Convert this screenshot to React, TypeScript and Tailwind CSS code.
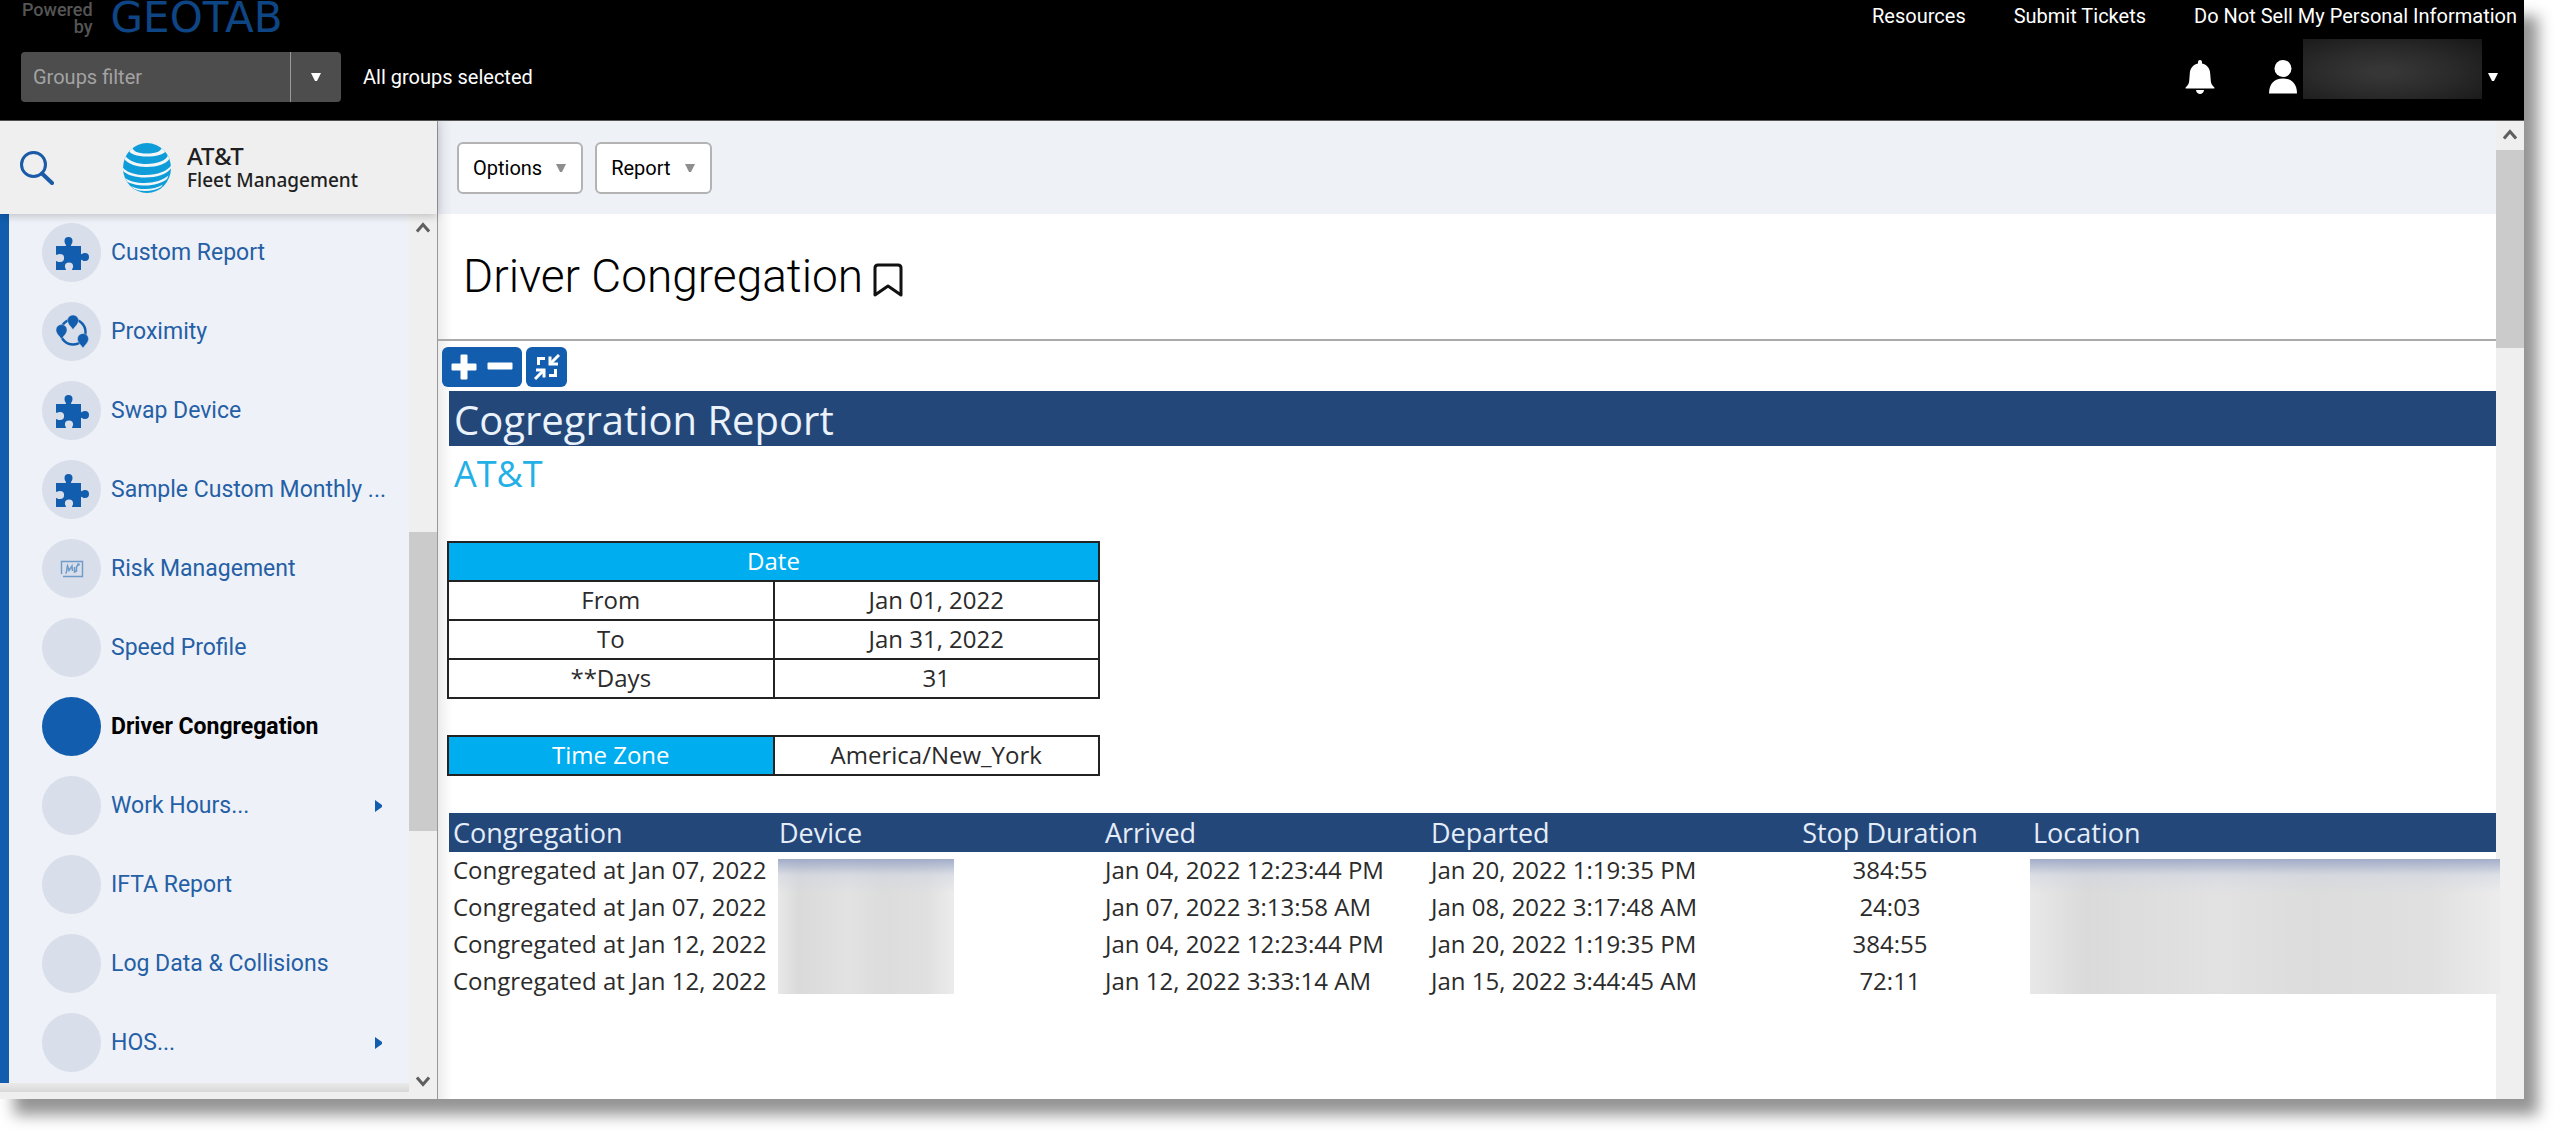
import React from 'react';

type IconName = 'puzzle' | 'proximity' | 'chart';

interface NavItem {
  label: string;
  icon?: IconName;
  active?: boolean;
  expandable?: boolean;
}

const navItems: NavItem[] = [
  { label: 'Custom Report', icon: 'puzzle' },
  { label: 'Proximity', icon: 'proximity' },
  { label: 'Swap Device', icon: 'puzzle' },
  { label: 'Sample Custom Monthly ...', icon: 'puzzle' },
  { label: 'Risk Management', icon: 'chart' },
  { label: 'Speed Profile' },
  { label: 'Driver Congregation', active: true },
  { label: 'Work Hours...', expandable: true },
  { label: 'IFTA Report' },
  { label: 'Log Data & Collisions' },
  { label: 'HOS...', expandable: true },
];

const stops = [
  { group: 'Congregated at Jan 07, 2022', arrived: 'Jan 04, 2022 12:23:44 PM', departed: 'Jan 20, 2022 1:19:35 PM', duration: '384:55' },
  { group: 'Congregated at Jan 07, 2022', arrived: 'Jan 07, 2022 3:13:58 AM', departed: 'Jan 08, 2022 3:17:48 AM', duration: '24:03' },
  { group: 'Congregated at Jan 12, 2022', arrived: 'Jan 04, 2022 12:23:44 PM', departed: 'Jan 20, 2022 1:19:35 PM', duration: '384:55' },
  { group: 'Congregated at Jan 12, 2022', arrived: 'Jan 12, 2022 3:33:14 AM', departed: 'Jan 15, 2022 3:44:45 AM', duration: '72:11' },
];

const dateRows = [
  ['From', 'Jan 01, 2022'],
  ['To', 'Jan 31, 2022'],
  ['**Days', '31'],
];

const CaretDown: React.FC<{ className?: string }> = ({ className }) => (
  <svg viewBox="0 0 10 8" className={`h-2 w-2.5 ${className ?? ''}`} fill="currentColor" aria-hidden="true">
    <path d="M0 0h10L6 8H4z" />
  </svg>
);

const ScrollArrow: React.FC<{ down?: boolean }> = ({ down }) => (
  <svg viewBox="0 0 14 11" className={`h-[11px] w-3.5 ${down ? 'rotate-180' : ''}`} fill="none" stroke="#5f5f5f" strokeWidth="3" aria-hidden="true">
    <path d="M1 9.500 7 2.500 13 9.500" />
  </svg>
);

const NavIcon: React.FC<{ name: IconName }> = ({ name }) => {
  if (name === 'puzzle') {
    return (
      <svg viewBox="0 0 34 34" className="size-[34px]" fill="#125dae" aria-hidden="true">
        <path d="M1 10h9.500c.6 0 .8-.7.4-1.200C10 7.700 9.500 6.500 9.500 5a4 4 0 0 1 8 0c0 1.500-.5 2.700-1.400 3.800-.4.5-.2 1.200.4 1.200H26v7.500c0 .7.600 1 1.100.6C28 17.200 29 17 30 17a4 4 0 0 1 0 8c-1 0-2-.2-2.900-1.100-.5-.4-1.100-.1-1.100.6V34h-8.300c-.6 0-.8-.5-.5-1 .6-.8.900-1.500.9-2.500a4.100 4.100 0 0 0-8.200 0c0 1 .3 1.700.9 2.500.3.500.1 1-.5 1H1v-8.300c0-.6.500-.8 1-.5.8.6 1.700.9 3 .9a4.100 4.100 0 0 0 0-8.200c-1.300 0-2.200.3-3 .9-.5.3-1 .1-1-.5z" />
      </svg>
    );
  }
  if (name === 'proximity') {
    return (
      <svg viewBox="0 0 34 34" className="size-[34px]" aria-hidden="true">
        <circle cx="18" cy="17" r="12.500" fill="none" stroke="#125dae" strokeWidth="2.500" />
        <g fill="#125dae" stroke="#d8deea" strokeWidth=".4">
          <path d="M18 14.500c-3-4-5.500-6-5.500-9a5.500 5.500 0 0 1 11 0c0 3-2.500 5-5.500 9z" />
          <path d="M6.500 24c-3-4-5.500-6-5.500-9a5.500 5.500 0 0 1 11 0c0 3-2.500 5-5.500 9z" />
          <path d="M28 33c-3-4-5.500-6-5.500-9a5.500 5.500 0 0 1 11 0c0 3-2.500 5-5.500 9z" />
        </g>
      </svg>
    );
  }
  return (
    <svg viewBox="0 0 24 18" className="h-[18px] w-6" fill="none" stroke="#6f9bcb" aria-hidden="true">
      <path d="M1.500 14V1.500h21v15H3" strokeWidth="1.400" />
      <path d="M5.500 13.500c2-1 1-6 2-8l1.500 5 3-4.500.5 5M14.500 7v5l2-1V7l2-3" strokeWidth="1.500" />
      <circle cx="18.500" cy="4.500" r="1" />
    </svg>
  );
};

const Globe = () => (
  <svg viewBox="0 0 48 50" className="h-[50px] w-12" aria-hidden="true">
    <defs>
      <clipPath id="globe">
        <ellipse cx="24" cy="25" rx="24" ry="25" />
      </clipPath>
    </defs>
    <g clipPath="url(#globe)">
      <path d="M0 0h48v50H0z" fill="#0f9dd9" />
      <g fill="#f3f6f8">
        <path d="M10 3C8 8 15 10.500 24 10.500S40 8 38.500 3L43 8c-2 3.500-10 5.500-19 5.500C14 13.500 6 11 6 7z" />
        <path d="M2.500 13c4 5.500 12 8 21 8 11 0 20-3.500 21.500-9l1.500 3.500c-3 5.500-12 8.500-23 8.500-10 0-18-3-22-7.500z" />
        <path d="M-.5 24c4 5.500 13 8 23 8 12 0 22-4 25.500-9.500v3c-5 6-14 9-26 9-10 0-18-2.500-22.500-7z" />
        <path d="M1.500 34.500c5 4 12 5.500 20 5.500 10 0 19-3 24-7.500l-1.500 3.500c-5 4-13 6.500-22 6.500-7 0-14-1.500-18-4z" />
        <path d="M8 43c4 2.500 9 3 14 3 7 0 13-1.500 18-4.500l-2 2.500c-4 2.500-10 4-16 4-4 0-8-.8-11-2z" />
      </g>
    </g>
  </svg>
);

const TopBar = () => (
  <header className="flex h-[121px] justify-between border-b border-[#555] bg-black font-[Roboto] text-xl text-white">
    <div>
      <div className="flex h-[52px] items-start gap-[18px] pl-[22px]">
        <p className="pt-px text-right text-lg leading-[17px] font-medium text-[#555]">
          Powered
          <br />
          by
        </p>
        <span className="font-['DejaVu_Sans'] text-[42px] leading-9 text-[#0e4584]">GEOTAB</span>
      </div>
      <div className="flex items-center gap-[22px] pl-[21px]">
        <div className="flex h-[50px] w-80 rounded-sm bg-[#4d4d4d]">
          <input
            type="text"
            aria-label="Groups filter"
            placeholder="Groups filter"
            className="min-w-0 flex-1 px-3 leading-6 placeholder:text-[#a3a3a3]"
          />
          <button aria-label="Show groups" className="flex w-[51px] items-center justify-center border-l border-[#999]">
            <CaretDown />
          </button>
        </div>
        <span>All groups selected</span>
      </div>
    </div>
    <div className="flex flex-col items-end">
      <nav className="flex gap-12 pt-1 pr-[7px] leading-6">
        <a href="#resources">Resources</a>
        <a href="#tickets">Submit Tickets</a>
        <a href="#privacy">Do Not Sell My Personal Information</a>
      </nav>
      <div className="flex items-center pt-[11px] pr-[26px]">
        <button aria-label="Notifications" className="mr-[54px] pt-4">
          <svg viewBox="0 0 30 34" className="h-[34px] w-[30px]" fill="currentColor">
            <path d="M15 0c1.200 0 2 .8 2 2v1.600c5 1 7.800 4.800 8.200 9.900l.6 7.500c.2 2.300 1.200 4.300 3.400 6.200.5.500.4 1.300-.4 1.300H1.200c-.8 0-.9-.8-.4-1.300C3 25.300 4 23.300 4.200 21l.6-7.500C5.200 8.400 8 4.600 13 3.600V2c0-1.200.8-2 2-2z" />
            <path d="M11 30h8c0 2-2 4-4 4s-4-2-4-4z" />
          </svg>
        </button>
        <button aria-label="Account" className="flex items-center gap-1.5">
          <svg viewBox="0 0 28 34" className="mt-4 h-[34px] w-7" fill="currentColor">
            <ellipse cx="14" cy="8.500" rx="8.500" ry="8.500" />
            <path d="M0 33.500C0 24 5 18.500 14 18.500S28 24 28 33.500z" />
          </svg>
          <span className="h-[60px] w-[179px] bg-[radial-gradient(ellipse_at_45%_55%,#363636_10%,#2a2a2a_50%,#171717_100%)]" />
          <CaretDown className="mt-4" />
        </button>
      </div>
    </div>
  </header>
);

const Sidebar = () => (
  <aside className="flex w-[438px] shrink-0 flex-col border-r border-[#999] bg-[#efefef]">
    <div className="z-10 flex h-[93px] items-center pl-5 shadow-[0_2px_8px_rgba(0,0,0,0.2)]">
      <button aria-label="Search" className="mr-[69px]">
        <svg viewBox="0 0 34 34" className="size-[34px]" fill="none" stroke="#1a5ba8" strokeWidth="3">
          <circle cx="13.500" cy="13.500" r="12" />
          <path d="m22 22.500 10 9.500" strokeWidth="4" strokeLinecap="round" />
        </svg>
      </button>
      <a href="#home" className="flex items-center gap-4 font-['Noto_Sans'] font-medium text-[#1f1f1f]">
        <Globe />
        <span className="flex flex-col">
          <span className="text-2xl leading-6">AT&amp;T</span>
          <span className="text-[19px] leading-6">Fleet Management</span>
        </span>
      </a>
    </div>
    <div className="flex flex-1">
      <div className="flex min-w-0 flex-1 flex-col">
        <nav className="border-l-[9px] border-[#125dae] bg-[#eef1f7] font-[Roboto] text-[23px]">
          {navItems.map((item) => (
            <a
              key={item.label}
              href="#nav"
              className={`flex h-[79px] items-center gap-2.5 pr-[27px] pb-0.5 pl-[33px] ${item.active ? 'font-bold text-black' : 'text-[#255fa6]'}`}
            >
              <span className={`flex size-[59px] shrink-0 items-center justify-center rounded-full ${item.active ? 'bg-[#125dae]' : 'bg-[#d8deea]'}`}>
                {item.icon && <NavIcon name={item.icon} />}
              </span>
              <span className="min-w-0 flex-1 pt-0.5 whitespace-nowrap">{item.label}</span>
              {item.expandable && (
                <svg viewBox="0 0 7 12" className="h-3 w-[7px]" fill="#125dae" aria-hidden="true">
                  <path d="M0 0l7 5v2l-7 5z" />
                </svg>
              )}
            </a>
          ))}
        </nav>
        <div className="h-[9px] bg-linear-to-b from-[#eaeaea] to-[#d8d8d8]" />
      </div>
      <div className="flex w-7 shrink-0 flex-col items-center bg-[#efefef] pt-2 pb-3">
        <ScrollArrow />
        <div className="mt-[299px] h-[299px] w-full bg-[#cbcbcb]" />
        <div className="mt-auto">
          <ScrollArrow down />
        </div>
      </div>
    </div>
  </aside>
);

const ToolbarButton: React.FC<{ label: string }> = ({ label }) => (
  <button className="flex h-[52px] items-center gap-3.5 rounded-md border-2 border-[#b3b3b3] bg-white px-3.5 font-[Roboto] text-xl text-black">
    {label}
    <CaretDown className="mr-px text-[#8e8e8e]" />
  </button>
);

const cell = 'border-2 border-[#222] p-0 pb-0.5 text-center leading-8';
const blur =
  'bg-[linear-gradient(180deg,rgba(150,163,195,0.85)_0,rgba(205,211,224,0.5)_16px,transparent_34px),linear-gradient(90deg,#e8e8e8_0,#dadada_12%,#e2e2e2_40%,#dcdcdc_60%,#e0e0e0_85%,#ececec_100%)]';

const Report = () => (
  <section className="pl-[11px] font-['Open_Sans'] text-2xl text-[#2b2b2b]">
    <h2 className="h-[55px] bg-[#24477a] pl-[5px] text-[40px] leading-[58px] text-[#eaf2fb]">Cogregration Report</h2>
    <p className="pl-[5px] text-4xl leading-[56px] text-[#22b0e6]">AT&amp;T</p>

    <table className="mt-[39px] -ml-0.5 w-[653px] table-fixed border-collapse">
      <thead>
        <tr className="h-[39px] bg-[#00adef] text-white">
          <th colSpan={2} className={`${cell} font-normal`}>Date</th>
        </tr>
      </thead>
      <tbody>
        {dateRows.map(([label, value]) => (
          <tr key={label} className="h-[39px]">
            <td className={cell}>{label}</td>
            <td className={cell}>{value}</td>
          </tr>
        ))}
      </tbody>
    </table>

    <table className="mt-9 -ml-0.5 w-[653px] table-fixed border-collapse">
      <tbody>
        <tr className="h-[39px]">
          <th scope="row" className={`${cell} bg-[#00adef] font-normal text-white`}>Time Zone</th>
          <td className={cell}>America/New_York</td>
        </tr>
      </tbody>
    </table>

    <div className="relative mt-[37px]">
      <table className="w-full table-fixed">
        <thead>
          <tr className="h-[39px] bg-[#24477a] text-left text-[27px] leading-9 text-[#e4edf8]">
            <th className="w-[326px] p-0 pl-1 font-normal">Congregation</th>
            <th className="w-[326px] p-0 pl-1 font-normal">Device</th>
            <th className="w-[326px] p-0 pl-1 font-normal">Arrived</th>
            <th className="w-[326px] p-0 pl-1 font-normal">Departed</th>
            <th className="w-[274px] p-0 text-center font-normal">Stop Duration</th>
            <th className="p-0 pl-1.5 font-normal">Location</th>
          </tr>
        </thead>
        <tbody className="align-top">
          {stops.map((stop, idx) => (
            <tr key={idx} className="h-[37px] leading-9 whitespace-nowrap">
              <td className="p-0 pl-1">{stop.group}</td>
              <td />
              <td className="p-0 pl-1">{stop.arrived}</td>
              <td className="p-0 pl-1">{stop.departed}</td>
              <td className="p-0 text-center">{stop.duration}</td>
              <td />
            </tr>
          ))}
        </tbody>
      </table>
      {/* Redacted columns */}
      <div className={`absolute top-[46px] left-[329px] h-[135px] w-44 ${blur}`} />
      <div className={`absolute top-[46px] -right-1 left-[1581px] h-[135px] ${blur}`} />
    </div>
  </section>
);

const Content = () => (
  <main className="flex min-w-0 flex-1 bg-white">
    <div className="min-w-0 flex-1 bg-linear-to-r from-[#ececec] to-white to-[14px]">
      <div className="flex h-[93px] items-center gap-3 bg-linear-to-r from-[#dfe3e9] to-[#eef1f6] to-[14px] pl-[19px]">
        <ToolbarButton label="Options" />
        <ToolbarButton label="Report" />
      </div>
      <div className="flex h-[127px] items-center gap-2.5 border-b-2 border-[#aaa] pl-[25px]">
        <h1 className="font-[Roboto] text-[46px] font-light text-black">Driver Congregation</h1>
        <button aria-label="Bookmark" className="pt-1.5">
          <svg viewBox="0 0 30 34" className="h-[34px] w-[30px]" fill="none" stroke="#111" strokeWidth="3" strokeLinejoin="round">
            <path d="M2 32V5c0-2 1.500-3 3-3h20c1.500 0 3 1 3 3v27L15 23z" />
          </svg>
        </button>
      </div>
      <div className="flex gap-1 py-1.5 pb-1 pl-1">
        <div className="flex h-10 w-20 items-center justify-around rounded-md bg-[#125dae] px-1">
          <button aria-label="Expand">
            <svg viewBox="0 0 26 26" className="size-[26px]" fill="#fff">
              <path d="M9.500 1.500a1 1 0 0 1 1-1h5a1 1 0 0 1 1 1v8h8a1 1 0 0 1 1 1v5a1 1 0 0 1-1 1h-8v8a1 1 0 0 1-1 1h-5a1 1 0 0 1-1-1v-8h-8a1 1 0 0 1-1-1v-5a1 1 0 0 1 1-1h8z" />
            </svg>
          </button>
          <button aria-label="Collapse">
            <svg viewBox="0 0 26 26" className="size-[26px]" fill="#fff">
              <rect x=".5" y="8.500" width="25" height="7" rx="1" />
            </svg>
          </button>
        </div>
        <button aria-label="Fit to screen" className="flex h-10 w-[41px] items-center justify-center rounded-md bg-[#125dae]">
          <svg viewBox="0 0 26 26" className="size-[26px]" fill="none" stroke="#fff" strokeWidth="3">
            <path d="M4.500 11V4.500H11M15 21.500h6.500V15" />
            <path d="M25 1l-8 8M1 25l8-8" />
            <path d="M16 2.500V10h8M2 16h8v7.500" />
          </svg>
        </button>
      </div>
      <Report />
    </div>
    <div className="flex w-7 shrink-0 flex-col items-center bg-[#efefef] pt-2">
      <ScrollArrow />
      <div className="mt-2.5 h-[198px] w-full bg-[#cbcbcb]" />
    </div>
  </main>
);

const App: React.FC = () => (
  <div className="flex min-h-screen flex-col overflow-hidden bg-white pr-9 pb-9">
    <div className="flex flex-1 flex-col shadow-[14px_16px_14px_rgba(0,0,0,0.42)]">
      <TopBar />
      <div className="flex flex-1">
        <Sidebar />
        <Content />
      </div>
    </div>
  </div>
);

export default App;
